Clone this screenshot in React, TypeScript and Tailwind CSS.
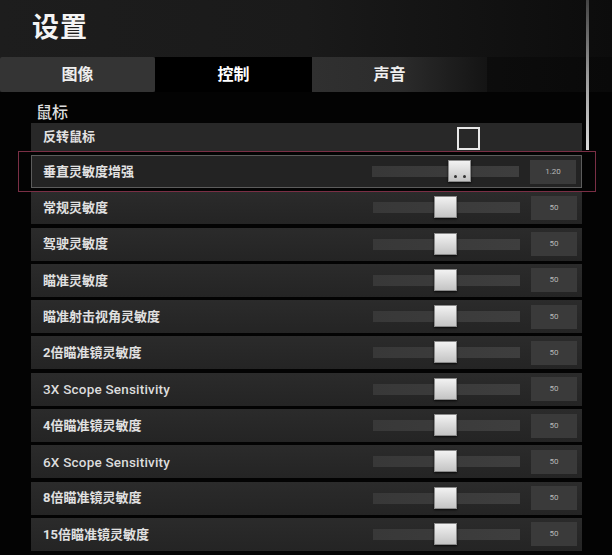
import React from "react";

const rows: { label: string; value: string; thumb: number; en?: boolean }[] = [
  { label: "常规灵敏度", value: "50", thumb: 61 },
  { label: "驾驶灵敏度", value: "50", thumb: 61 },
  { label: "瞄准灵敏度", value: "50", thumb: 61 },
  { label: "瞄准射击视角灵敏度", value: "50", thumb: 61 },
  { label: "2倍瞄准镜灵敏度", value: "50", thumb: 61 },
  { label: "3X Scope Sensitivity", value: "50", thumb: 61, en: true },
  { label: "4倍瞄准镜灵敏度", value: "50", thumb: 61 },
  { label: "6X Scope Sensitivity", value: "50", thumb: 61, en: true },
  { label: "8倍瞄准镜灵敏度", value: "50", thumb: 61 },
  { label: "15倍瞄准镜灵敏度", value: "50", thumb: 61 },
];

const font = { fontFamily: 'Roboto, "Noto Sans CJK SC", sans-serif' };

function Slider({ thumb, value, dots }: { thumb: number; value: string; dots?: boolean }) {
  return (
    <div className="flex items-center">
      <div className="relative h-[11px] w-[147px] bg-gradient-to-r from-[#383838] to-[#3e3e3e]">
        <div
          className="absolute top-[-6px] h-[22px] w-[23px] border border-[#8a8a8a] bg-gradient-to-b from-[#f2f2f2] to-[#c4c4c4] shadow-[0_1px_2px_rgba(0,0,0,0.8)]"
          style={{ left: thumb }}
        >
          {dots && (
            <div className="absolute bottom-[3px] left-0 right-0 flex justify-center gap-[6px]">
              <div className="h-[3px] w-[3px] rounded-full bg-[#333]" />
              <div className="h-[3px] w-[3px] rounded-full bg-[#333]" />
            </div>
          )}
        </div>
      </div>
      <div className="ml-[11px] mr-[5px] flex h-[24px] w-[46px] items-center justify-center bg-[#3a3a3a] text-[8px] text-[#b8b8b8]">
        {value}
      </div>
    </div>
  );
}

export default function App() {
  return (
    <div className="relative h-[555px] w-[612px] overflow-hidden bg-[#030303] text-white" style={font}>
      {/* header */}
      <div className="flex h-[57px] items-center bg-gradient-to-r from-[#1d1d1d] via-[#1a1a1a] to-[#0c0c0c] pl-[32px]">
        <div className="text-[27px] font-bold leading-none tracking-[1px] text-[#f4f4f4]">设置</div>
      </div>
      {/* tabs */}
      <div className="flex h-[35px] bg-gradient-to-r from-[#1a1a1a] to-[#090909]">
        <div className="flex w-[155px] items-center justify-center rounded-[2px] bg-[#343434] text-[16px] font-bold text-[#eeeeee]">
          图像
        </div>
        <div className="flex w-[157px] items-center justify-center bg-black text-[16px] font-bold text-white">
          控制
        </div>
        <div className="flex w-[175px] items-center justify-center bg-gradient-to-r from-[#303030] via-[#2c2c2c] to-[#141414] pr-[20px] text-[16px] font-bold text-[#eeeeee]">
          声音
        </div>
      </div>
      {/* section */}
      <div className="pl-[36px] pt-[12px] text-[16px] font-medium leading-[17px] text-[#dddddd]">鼠标</div>
      <div className="ml-[31px] mr-[30px] mt-[2px] flex flex-col">
        {/* row 1 */}
        <div className="flex h-[28px] items-center bg-[#282828] pl-[12px]">
          <div className="flex-1 text-[13px] font-bold text-[#e2e2e2]">反转鼠标</div>
          <div className="mr-[102px] mt-[3px] h-[23px] w-[23px] border-2 border-[#e8e8e8]" />
        </div>
        {/* row 2 highlighted */}
        <div className="relative mt-[4px] flex h-[33px] items-center border border-[#5c5c5c] bg-[#232323] pl-[11px]">
          <div className="flex-1 text-[13px] font-bold text-[#e2e2e2]">垂直灵敏度增强</div>
          <Slider thumb={76} value="1.20" dots />
          <div className="pointer-events-none absolute bottom-[-5px] left-[-14px] right-[-15px] top-[-5px] border border-[#7a2f45]" />
        </div>
        <div className="mt-[3.3px] flex flex-col gap-[3.3px]">
          {rows.map((r) => (
            <div key={r.label} className="flex h-[33px] items-center bg-gradient-to-b from-[#2b2b2b] to-[#242424] pl-[12px]">
              <div
                className={
                  r.en
                    ? "flex-1 text-[13.5px] font-medium tracking-[0.2px] text-[#dcdcdc]"
                    : "flex-1 text-[13px] font-bold text-[#e0e0e0]"
                }
              >
                {r.label}
              </div>
              <Slider thumb={r.thumb} value={r.value} />
            </div>
          ))}
        </div>
      </div>
      {/* scrollbar */}
      <div className="absolute left-[586px] top-0 h-[150px] w-[3px] bg-gradient-to-b from-[#444444] via-[#999999] to-[#d8d8d8]" />
    </div>
  );
}
